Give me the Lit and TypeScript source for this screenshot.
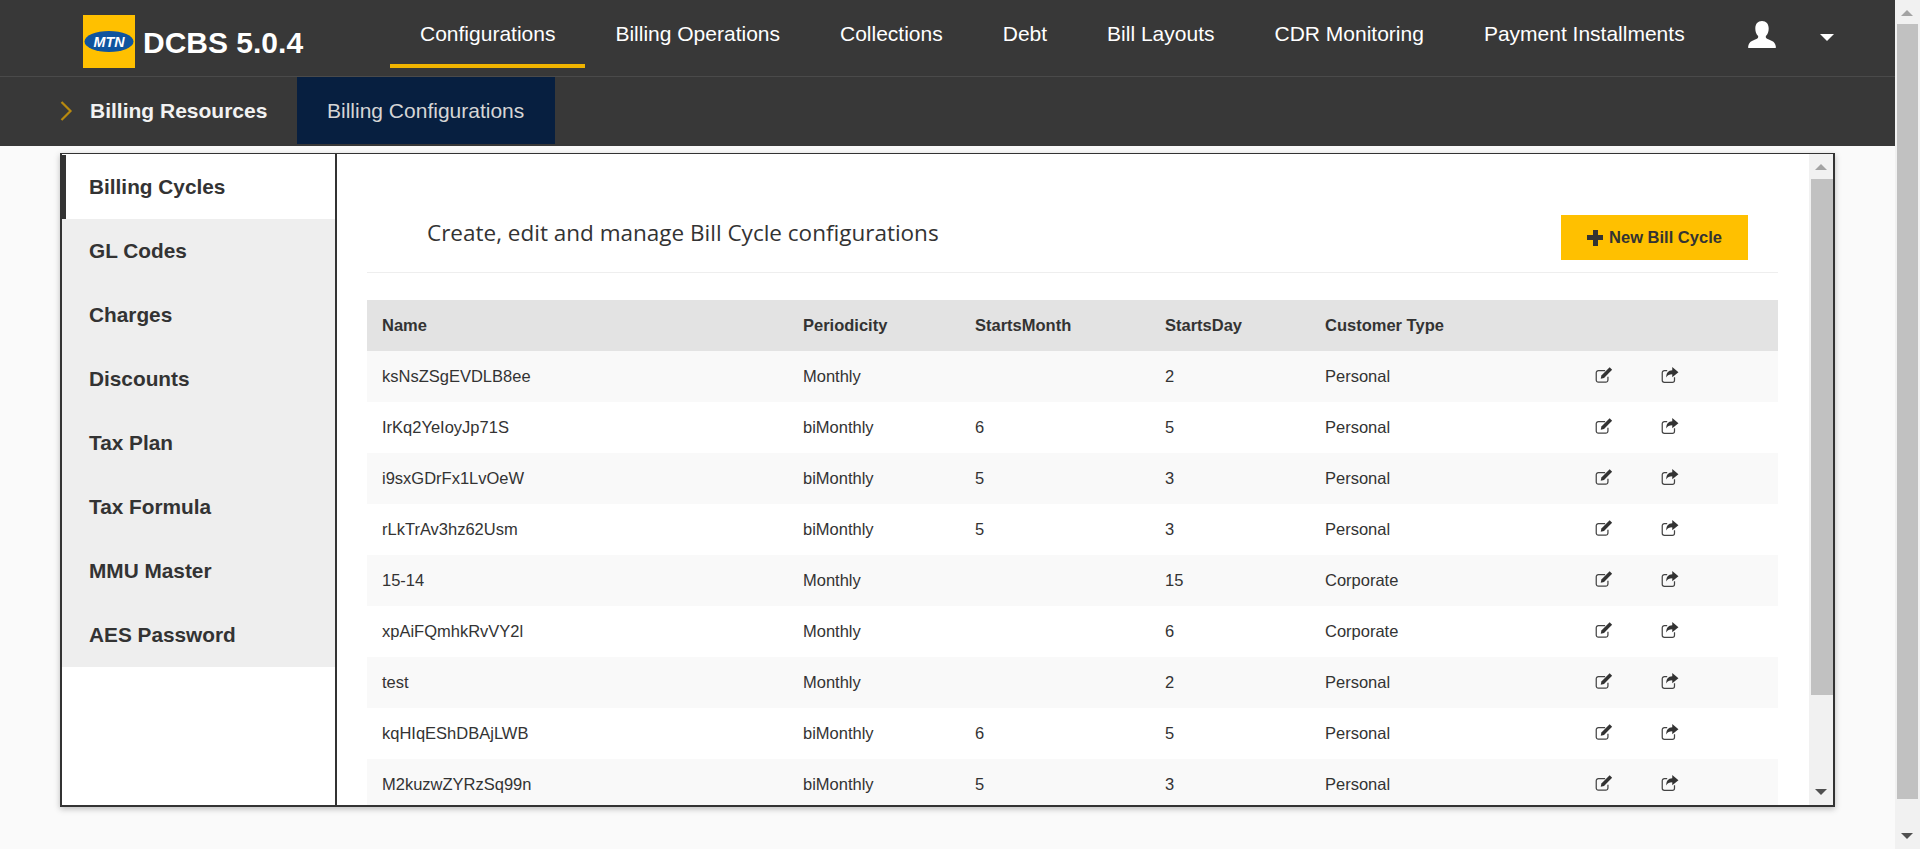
import { LitElement, html, css, svg } from 'lit';
import { customElement } from 'lit/decorators.js';

const NAV = ['Configurations', 'Billing Operations', 'Collections', 'Debt', 'Bill Layouts', 'CDR Monitoring', 'Payment Installments'];
const SIDE = ['Billing Cycles', 'GL Codes', 'Charges', 'Discounts', 'Tax Plan', 'Tax Formula', 'MMU Master', 'AES Password'];
const ROWS = [
  ['ksNsZSgEVDLB8ee', 'Monthly', '', '2', 'Personal'],
  ['IrKq2YeIoyJp71S', 'biMonthly', '6', '5', 'Personal'],
  ['i9sxGDrFx1LvOeW', 'biMonthly', '5', '3', 'Personal'],
  ['rLkTrAv3hz62Usm', 'biMonthly', '5', '3', 'Personal'],
  ['15-14', 'Monthly', '', '15', 'Corporate'],
  ['xpAiFQmhkRvVY2l', 'Monthly', '', '6', 'Corporate'],
  ['test', 'Monthly', '', '2', 'Personal'],
  ['kqHIqEShDBAjLWB', 'biMonthly', '6', '5', 'Personal'],
  ['M2kuzwZYRzSq99n', 'biMonthly', '5', '3', 'Personal'],
];

const logo = svg`<svg class="logo" viewBox="0 0 52 53" width="52" height="53">
  <rect width="52" height="53" fill="#ffc000"/>
  <ellipse cx="26" cy="26.5" rx="24.500" ry="10.500" fill="#0f549f"/>
  <text x="26" y="31.500" text-anchor="middle" textLength="31" lengthAdjust="spacingAndGlyphs" font-family="Liberation Sans" font-size="14" font-weight="700" font-style="italic" fill="#fff">MTN</text>
</svg>`;

const user = svg`<svg viewBox="0 0 28 28" width="28" height="28"><path fill="#fff" d="M14 0c4.200 0 6.700 3 6.700 7.400 0 3-1 5.600-2.600 7.400-.5.600-.4 1.900.3 2.400 1.300.9 3.500 1.700 5.600 2.800 2 1 3.300 2.600 3.800 5.300v1.800H.200v-1.800c.5-2.700 1.800-4.300 3.800-5.300 2.100-1.100 4.300-1.900 5.600-2.800.7-.5.800-1.800.3-2.400C8.300 13 7.300 10.400 7.300 7.400 7.300 3 9.800 0 14 0z"/></svg>`;

const edit = svg`<svg viewBox="0 0 16 16" width="18" height="18"><path fill="none" stroke="#444" stroke-width="1.100" d="M11.500 9.500v3a1.900 1.900 0 0 1-1.900 1.900H3a1.900 1.900 0 0 1-1.900-1.900V6A1.900 1.900 0 0 1 3 4.100h6"/><path fill="#333" d="M13 1.200l2.200 2.200-7.200 7.300-2.900.7.600-3z"/></svg>`;

const share = svg`<svg viewBox="0 0 16 16" width="18" height="18"><path fill="none" stroke="#444" stroke-width="1.100" d="M12 10v2.600a1.900 1.900 0 0 1-1.900 1.900H3a1.900 1.900 0 0 1-1.900-1.900V6A1.900 1.900 0 0 1 3 4.100h2.500"/><path fill="#333" d="M10 .8l5.500 4.700L10 10V7.300c-2.600 0-4.400.6-5.300 2.900C4.500 6.300 6.500 3.800 10 3.700z"/></svg>`;

@customElement('app-root')
export class AppRoot extends LitElement {
  static styles = css`
    :host {
      display: block;
      font-family: 'Liberation Sans', Arial, sans-serif;
      color: #333;
    }

    .page {
      display: flex;
      height: 849px;
      overflow: hidden;
      background: #fafafa;
    }

    .main {
      flex: 1;
      min-width: 0;
    }

    .topbar {
      display: flex;
      height: 76px;
      background: #383838;
      border-bottom: 1px solid #4a4a4a;
    }

    .brand {
      display: flex;
      align-items: center;
      gap: 8px;
      width: 390px;
      padding: 15px 0 0 83px;
      box-sizing: border-box;
      height: 68px;
      color: #fff;
      font-size: 30px;
      font-weight: 700;
    }

    .brand span {
      padding-top: 3px;
    }

    .logo {
      flex: none;
    }

    .nav {
      display: flex;
    }

    .nav a {
      height: 68px;
      box-sizing: border-box;
      padding: 22px 30px 0;
      color: #fff;
      font-size: 21px;
      line-height: 24px;
    }

    .nav a.on {
      border-bottom: 4px solid #f0b400;
    }

    .user {
      display: flex;
      align-items: flex-start;
      margin-left: 33px;
      padding-top: 21px;
    }

    .caret {
      width: 0;
      height: 0;
      margin: 13px 0 0 44px;
      border: 7.500px solid transparent;
      border-top-color: #fff;
      border-bottom: 0;
    }

    .subbar {
      display: flex;
      height: 69px;
      background: #383838;
    }

    .crumb {
      display: flex;
      align-items: center;
      gap: 16px;
      width: 297px;
      height: 67px;
      box-sizing: border-box;
      padding-left: 60px;
      color: #f2f2f2;
      font-size: 21px;
      font-weight: 700;
    }

    .tab {
      height: 67px;
      box-sizing: border-box;
      padding: 0 31px 0 30px;
      line-height: 67px;
      background: #071f40;
      color: #d5d5d5;
      font-size: 21px;
    }

    .panel {
      display: flex;
      height: 654px;
      box-sizing: border-box;
      margin: 7px 0 0 60px;
      width: 1775px;
      background: #fff;
      border: 2px solid #333;
      border-width: 1px 2px 2px 2px;
      box-shadow: 0 2px 6px rgba(0, 0, 0, 0.25);
    }

    .side {
      flex: none;
      width: 273px;
      padding-top: 1px;
      box-sizing: border-box;
    }

    .side div {
      height: 64px;
      line-height: 64px;
      padding-left: 27px;
      background: #eee;
      color: #333;
      font-size: 20.800px;
      font-weight: 700;
    }

    .side div.on {
      background: #fff;
      border-left: 4px solid #333;
      padding-left: 23px;
    }

    .content {
      flex: none;
      width: 1474px;
      box-sizing: border-box;
      border-left: 2px solid #333;
      padding: 0 30px;
      overflow: hidden;
    }

    .head {
      display: flex;
      justify-content: space-between;
      width: 1411px;
      height: 119px;
      box-sizing: border-box;
      padding: 61px 30px 0 60px;
      border-bottom: 1px solid #eee;
      margin-bottom: 27px;
    }

    h2 {
      margin: 0;
      padding-top: 2px;
      font-family: 'Open Sans', sans-serif;
      font-size: 22.500px;
      line-height: 32px;
      font-weight: 400;
      color: #333;
    }

    button {
      display: flex;
      align-items: center;
      justify-content: center;
      gap: 6px;
      width: 187px;
      height: 45px;
      border: 0;
      padding: 0;
      background: #ffc000;
      color: #333;
      font: 700 16.500px 'Liberation Sans', Arial, sans-serif;
    }

    .plus {
      width: 16px;
      height: 16px;
      background:
        linear-gradient(#333, #333) center / 16px 5px no-repeat,
        linear-gradient(#333, #333) center / 5px 16px no-repeat;
    }

    .row {
      display: grid;
      grid-template-columns: 421px 172px 190px 160px 270px 66px 1fr;
      align-items: center;
      height: 51px;
      padding-left: 15px;
      font-size: 16.500px;
      color: #333;
      width: 1411px;
      box-sizing: border-box;
    }

    .row.hd {
      background: #e3e3e3;
      font-weight: 700;
    }

    .row.odd {
      background: #f9f9f9;
    }

    .row svg {
      display: block;
      margin-top: -3px;
    }

    .bar {
      flex: none;
      position: relative;
      background: #f1f1f1;
    }

    .bar .thumb {
      background: #c1c1c1;
    }

    .inner {
      width: 24px;
      padding: 25px 0 0 2px;
      box-sizing: border-box;
    }

    .inner .thumb {
      height: 516px;
      width: 22px;
    }

    .outer {
      width: 25px;
      height: 849px;
      padding: 24px 2px 0;
      box-sizing: border-box;
    }

    .outer .thumb {
      height: 775px;
      width: 21px;
    }

    .arrow {
      position: absolute;
      width: 0;
      height: 0;
      border-left: 6px solid transparent;
      border-right: 6px solid transparent;
    }

    .arrow.up {
      border-bottom: 6px solid #a3a3a3;
      top: 10px;
      left: 6px;
    }

    .arrow.down {
      border-top: 6px solid #505050;
      bottom: 10px;
      left: 6px;
    }
  `;

  render() {
    return html`
      <div class="page">
        <div class="main">
          <div class="topbar">
            <div class="brand">${logo}<span>DCBS 5.0.4</span></div>
            <nav class="nav">
              ${NAV.map((n, i) => html`<a class=${i === 0 ? 'on' : ''}>${n}</a>`)}
            </nav>
            <div class="user">${user}<span class="caret"></span></div>
          </div>
          <div class="subbar">
            <div class="crumb">
              <svg width="14" height="20" viewBox="0 0 14 20"><path fill="none" stroke="#b8890f" stroke-width="2.200" d="M1.500 1l9 9-9 9"/></svg>
              <span>Billing Resources</span>
            </div>
            <div class="tab">Billing Configurations</div>
          </div>
          <div class="panel">
            <div class="side">
              ${SIDE.map((s, i) => html`<div class=${i === 0 ? 'on' : ''}>${s}</div>`)}
            </div>
            <div class="content">
              <div class="head">
                <h2>Create, edit and manage Bill Cycle configurations</h2>
                <button><span class="plus"></span>New Bill Cycle</button>
              </div>
              <div class="row hd">
                <span>Name</span><span>Periodicity</span><span>StartsMonth</span><span>StartsDay</span><span>Customer Type</span>
              </div>
              ${ROWS.map(
                (r, i) => html`<div class="row ${i % 2 === 0 ? 'odd' : ''}">
                  ${r.map((c) => html`<span>${c}</span>`)}
                  <span>${edit}</span><span>${share}</span>
                </div>`,
              )}
            </div>
            <div class="bar inner">
              <span class="arrow up"></span>
              <div class="thumb"></div>
              <span class="arrow down"></span>
            </div>
          </div>
        </div>
        <div class="bar outer">
          <span class="arrow up"></span>
          <div class="thumb"></div>
          <span class="arrow down"></span>
        </div>
      </div>
    `;
  }
}
